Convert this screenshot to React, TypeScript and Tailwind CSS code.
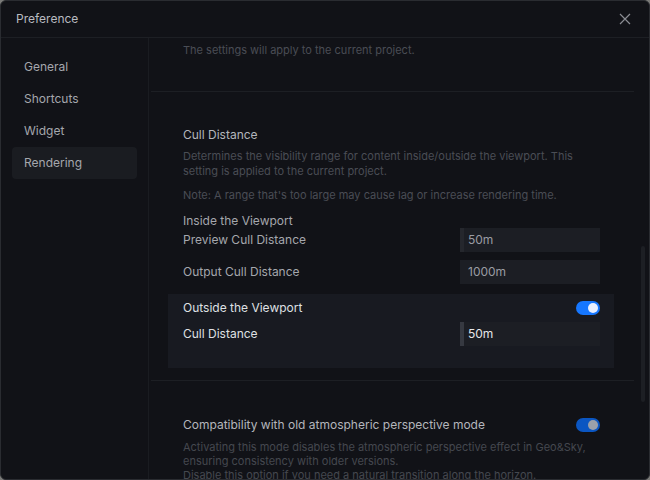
import React from "react";

const font = { fontFamily: "Inter, 'Noto Sans', sans-serif" };

function Toggle({ dim = false }: { dim?: boolean }) {
  return (
    <div
      className={`flex h-[14px] w-[24px] items-center justify-end rounded-full pr-[2px] ${
        dim ? "bg-[#0b56c2]" : "bg-[#1677ff]"
      }`}
    >
      <div className={`h-[10px] w-[10px] rounded-full ${dim ? "bg-[#9aa0aa]" : "bg-[#e8efff]"}`} />
    </div>
  );
}

function SliderInput({
  value,
  fill,
  bright = false,
}: {
  value: string;
  fill: string;
  bright?: boolean;
}) {
  return (
    <div className="flex h-[24px] w-[140px] items-stretch bg-[#1c1e24]">
      <div className={`w-[4px] ${fill}`} />
      <div
        className={`flex items-center pl-[4px] text-[12px] ${
          bright ? "text-[#e6e7ea]" : "text-[#9a9ca3]"
        }`}
      >
        {value}
      </div>
    </div>
  );
}

export default function App() {
  return (
    <div className="h-[480px] w-[650px] bg-[#7a7a78]" style={font}>
      <div className="flex h-full w-full flex-col overflow-hidden rounded-[6px] border border-[#2a2c31] bg-[#111217]">
        {/* title bar */}
        <div className="flex h-[37px] shrink-0 items-center justify-between border-b border-[#1d1f24] pl-[15px] pr-[18px]">
          <span className="text-[12px] text-[#b9bbc0]">Preference</span>
          <svg width="12" height="12" viewBox="0 0 12 12" className="text-[#8a8c92]">
            <path d="M1 1L11 11M11 1L1 11" stroke="currentColor" strokeWidth="1.2" />
          </svg>
        </div>

        <div className="flex min-h-0 flex-1">
          {/* sidebar */}
          <div className="flex w-[148px] shrink-0 flex-col border-r border-[#1a1c21] px-[11px] pt-[13px]">
            {["General", "Shortcuts", "Widget", "Rendering"].map((item) => (
              <div
                key={item}
                className={`flex h-[32px] items-center rounded-[4px] pl-[12px] text-[12px] text-[#a5a7ad] ${
                  item === "Rendering" ? "bg-[#1a1c21]" : ""
                }`}
              >
                {item}
              </div>
            ))}
          </div>

          {/* content */}
          <div className="relative flex min-w-0 flex-1 flex-col overflow-hidden">
            <div className="shrink-0 pl-[34px] pt-[4px] text-[11px] leading-[16px] text-[#4a4d55]">
              The settings will apply to the current project.
            </div>
            <div className="mt-[33px] mr-[15px] ml-[2px] shrink-0 border-t border-[#1d1f24]" />

            <div className="flex shrink-0 flex-col pl-[34px] pr-[49px] pt-[34px]">
              <div className="text-[12px] leading-[18px] text-[#b4b6bc]">Cull Distance</div>
              <div className="mt-[5px] text-[11px] leading-[15px] text-[#4a4d55]">
                Determines the visibility range for content inside/outside the viewport. This
                setting is applied to the current project.
              </div>
              <div className="mt-[9px] text-[11px] leading-[15px] text-[#4a4d55]">
                Note: A range that's too large may cause lag or increase rendering time.
              </div>
              <div className="mt-[9px] text-[12px] leading-[18px] text-[#a5a7ad]">
                Inside the Viewport
              </div>
              <div className="mt-[-2px] flex items-center justify-between">
                <span className="text-[12px] text-[#a5a7ad]">Preview Cull Distance</span>
                <SliderInput value="50m" fill="bg-[#25272d]" />
              </div>
              <div className="mt-[8px] flex items-center justify-between">
                <span className="text-[12px] text-[#a5a7ad]">Output Cull Distance</span>
                <SliderInput value="1000m" fill="bg-[#1c1e24]" />
              </div>
            </div>

            <div className="ml-[19px] mr-[35px] mt-[10px] flex h-[74px] shrink-0 flex-col bg-[#181a21] pl-[15px] pr-[14px] pt-[6px]">
              <div className="flex h-[16px] items-center justify-between">
                <span className="text-[12px] text-[#dfe0e3]">Outside the Viewport</span>
                <Toggle />
              </div>
              <div className="mt-[6px] flex items-center justify-between">
                <span className="text-[12px] text-[#dfe0e3]">Cull Distance</span>
                <SliderInput value="50m" fill="bg-[#363941]" bright />
              </div>
            </div>

            <div className="ml-[2px] mr-[15px] mt-[12px] shrink-0 border-t border-[#1d1f24]" />

            <div className="flex shrink-0 flex-col pl-[34px] pr-[49px] pt-[35px]">
              <div className="flex items-center justify-between">
                <span className="text-[12px] text-[#b4b6bc]">
                  Compatibility with old atmospheric perspective mode
                </span>
                <Toggle dim />
              </div>
              <div className="mt-[6px] text-[11px] leading-[14px] text-[#45484f]">
                Activating this mode disables the atmospheric perspective effect in Geo&amp;Sky,
                <br />
                ensuring consistency with older versions.
                <br />
                Disable this option if you need a natural transition along the horizon.
              </div>
            </div>

            {/* scrollbar */}
            <div className="absolute right-[4px] top-[208px] h-[156px] w-[4px] rounded-full bg-[#1d1f24]" />
          </div>
        </div>
      </div>
    </div>
  );
}
